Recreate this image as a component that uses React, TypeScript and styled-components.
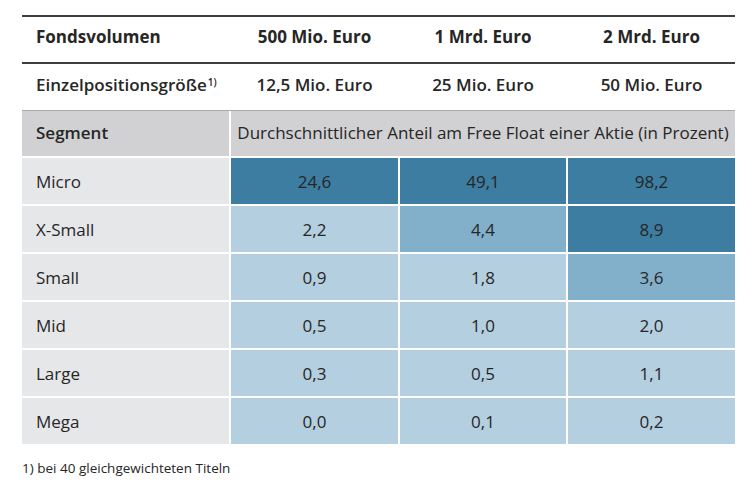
import styled, { createGlobalStyle } from "styled-components";

const GlobalStyle = createGlobalStyle`
  body {
    margin: 0;
    background: #ffffff;
    font-family: "Open Sans", "Noto Sans", sans-serif;
    color: #262626;
  }
`;

const rows = [
  { name: "Micro", values: ["24,6", "49,1", "98,2"], tones: [3, 3, 3] },
  { name: "X-Small", values: ["2,2", "4,4", "8,9"], tones: [1, 2, 3] },
  { name: "Small", values: ["0,9", "1,8", "3,6"], tones: [1, 1, 2] },
  { name: "Mid", values: ["0,5", "1,0", "2,0"], tones: [1, 1, 1] },
  { name: "Large", values: ["0,3", "0,5", "1,1"], tones: [1, 1, 1] },
  { name: "Mega", values: ["0,0", "0,1", "0,2"], tones: [1, 1, 1] },
];

const toneColor: Record<number, string> = {
  1: "#b4cfe0",
  2: "#82b0ca",
  3: "#3c7da1",
};

const App = () => {
  return (
    <Page>
      <GlobalStyle />
      <Head>
        <HeadRow $rule="#3d3d3d" $h={45} $w={2}>
          <HeadCell $bold $left>Fondsvolumen</HeadCell>
          <HeadCell $bold>500 Mio. Euro</HeadCell>
          <HeadCell $bold>1 Mrd. Euro</HeadCell>
          <HeadCell $bold>2 Mrd. Euro</HeadCell>
        </HeadRow>
        <HeadRow $rule="#a9a9a9" $h={46} $w={1}>
          <HeadCell $left>
            Einzelpositionsgröße<Sup>1)</Sup>
          </HeadCell>
          <HeadCell>12,5 Mio. Euro</HeadCell>
          <HeadCell>25 Mio. Euro</HeadCell>
          <HeadCell>50 Mio. Euro</HeadCell>
        </HeadRow>
      </Head>
      <Body>
        <SegmentLabel>Segment</SegmentLabel>
        <SegmentTitle>
          Durchschnittlicher Anteil am Free Float einer Aktie (in Prozent)
        </SegmentTitle>
        {rows.map((r) => (
          <Row key={r.name}>
            <NameCell>{r.name}</NameCell>
            {r.values.map((v, i) => (
              <ValueCell key={i} $bg={toneColor[r.tones[i]]}>
                {v}
              </ValueCell>
            ))}
          </Row>
        ))}
      </Body>
      <Note>1) bei 40 gleichgewichteten Titeln</Note>
    </Page>
  );
};

export default App;

const cols = "207px 167px 166px 167px";

const Page = styled.div`
  width: 713px;
  padding: 15px 0 0 22px;
`;

const Head = styled.div`
  border-top: 2px solid #3d3d3d;
`;

const HeadRow = styled.div<{ $rule: string; $h: number; $w: number }>`
  display: grid;
  grid-template-columns: ${cols};
  column-gap: 2px;
  height: ${(p) => p.$h}px;
  box-sizing: content-box;
  border-bottom: ${(p) => p.$w}px solid ${(p) => p.$rule};
`;

const HeadCell = styled.div<{ $bold?: boolean; $left?: boolean }>`
  display: flex;
  align-items: center;
  justify-content: ${(p) => (p.$left ? "flex-start" : "center")};
  padding-left: ${(p) => (p.$left ? "14px" : "0")};
  padding-bottom: 6px;
  font-size: 17px;
  font-weight: ${(p) => (p.$bold ? 700 : 600)};
  color: #262626;
`;

const Sup = styled.sup`
  font-size: 10px;
  font-weight: 600;
  position: relative;
  top: -2px;
  margin-left: 1px;
`;

const Body = styled.div`
  display: grid;
  grid-template-columns: ${cols};
  column-gap: 2px;
  row-gap: 2px;
  background: #ffffff;
`;

const Row = styled.div`
  display: contents;
`;

const SegmentLabel = styled.div`
  height: 45px;
  box-sizing: border-box;
  padding: 0 0 3px 14px;
  display: flex;
  align-items: center;
  background: #d1d1d3;
  font-size: 17px;
  font-weight: 600;
`;

const SegmentTitle = styled.div`
  grid-column: span 3;
  display: flex;
  align-items: center;
  justify-content: center;
  padding-bottom: 3px;
  background: #d1d1d3;
  font-size: 17px;
`;

const NameCell = styled.div`
  height: 46px;
  display: flex;
  align-items: center;
  padding-left: 14px;
  background: #e6e7e9;
  font-size: 17px;
`;

const ValueCell = styled.div<{ $bg: string }>`
  display: flex;
  align-items: center;
  justify-content: center;
  background: ${(p) => p.$bg};
  font-size: 17px;
`;

const Note = styled.div`
  margin-top: 15px;
  font-size: 13.5px;
  color: #262626;
`;
